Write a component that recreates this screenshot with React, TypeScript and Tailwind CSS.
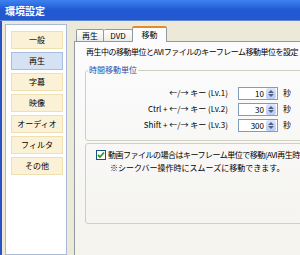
import React from "react";

const F = { fontFamily: '"Noto Sans CJK JP", "Noto Sans", sans-serif' };

function Spin({ v }: { v: string }) {
  return (
    <div className="w-[40px] h-[13px] bg-white border border-[#7F9DB9] flex items-center">
      <div className="flex-1 text-right pr-[2px] text-[8px] leading-[11px]">{v}</div>
      <div className="w-[10px] h-[11px] mr-[1px] rounded-[2px] bg-gradient-to-b from-[#DCE6FB] to-[#B6CAF5] flex flex-col items-center justify-center gap-[1px]">
        <svg width="6" height="3" viewBox="0 0 6 3"><path d="M0 3 L3 0 L6 3Z" fill="#4D6185" /></svg>
        <svg width="6" height="3" viewBox="0 0 6 3"><path d="M0 0 L3 3 L6 0Z" fill="#4D6185" /></svg>
      </div>
    </div>
  );
}

function Row({ label, v }: { label: string; v: string }) {
  return (
    <div className="flex items-center h-[16px]">
      <div className="w-[142px] text-right text-[8px] leading-[10px] whitespace-nowrap">{label}</div>
      <div className="ml-[10px]"><Spin v={v} /></div>
      <div className="ml-[5px] text-[8px] leading-[10px]">秒</div>
    </div>
  );
}

export default function App() {
  const items = ["一般", "再生", "字幕", "映像", "オーディオ", "フィルタ", "その他"];
  return (
    <div className="w-[300px] h-[255px] overflow-hidden flex flex-col bg-[#ECE9D8] text-black" style={F}>
      <div className="h-[21px] shrink-0 bg-gradient-to-b from-[#3E82F0] via-[#2159D4] to-[#2558CF] flex items-center pl-[5px] text-white font-bold text-[10px] border-b border-[#5E86D8]">
        環境設定
      </div>
      <div className="flex-1 flex min-h-0 border-l-[2px] border-[#2A50C8]">
        <div className="ml-[3px] mt-[3px] w-[62px] shrink-0 bg-white border border-[#A9B9D6] flex flex-col gap-[3px] pt-[6px] pl-[5px]">
          {items.map((t, i) => (
            <div
              key={t}
              className={
                "w-[52px] h-[18px] flex items-center justify-center text-[8px] border " +
                (i === 1
                  ? "bg-[#D5E2F4] border-[#A8BEDF]"
                  : "bg-[#FBF1D6] border-[#F0DFB0]")
              }
            >
              {t}
            </div>
          ))}
        </div>
        <div className="ml-[7px] mt-[5px] flex-1 flex flex-col min-w-0">
          <div className="h-[15px] flex items-end pl-[2px] shrink-0">
            <div className="w-[28px] h-[12px] border border-b-0 border-[#919B9C] rounded-t-[2px] bg-gradient-to-b from-white to-[#ECEBE6] text-[8px] flex items-center justify-center">
              再生
            </div>
            <div className="w-[29px] h-[12px] border border-b-0 border-l-0 border-[#919B9C] rounded-t-[2px] bg-gradient-to-b from-white to-[#ECEBE6] text-[8px] flex items-center justify-center">
              DVD
            </div>
            <div className="relative z-10 -ml-[1px] w-[35px] h-[16px] -mb-[1px] border border-b-0 border-[#919B9C] border-t-[#E68B2C] border-t-[2px] rounded-t-[2px] bg-[#FCFCFE] text-[8px] flex items-start justify-center pt-[1px]">
              移動
            </div>
          </div>
          <div className="flex-1 border-t border-l border-[#919B9C] bg-gradient-to-b from-[#FCFCFE] to-[#F4F3EE] flex flex-col">
            <div className="pl-[11px] pt-[5px] text-[8px] leading-[10px] tracking-[-0.5px] whitespace-nowrap">
              再生中の移動単位とAVIファイルのキーフレーム移動単位を設定
            </div>
            <div className="ml-[10px] mt-[13px] w-[240px] relative border border-[#D0D0BF] rounded-[3px] pt-[14px] pb-[7px]">
              <div className="absolute -top-[6px] left-[2px] px-[1px] bg-[#FAFAF8] text-[8px] leading-[10px] text-[#1F4FA8]">
                時間移動単位
              </div>
              <Row label="←/→ キー (Lv.1)" v="10" />
              <Row label="Ctrl + ←/→ キー (Lv.2)" v="30" />
              <Row label="Shift + ←/→ キー (Lv.3)" v="300" />
            </div>
            <div className="ml-[10px] mt-[2px] w-[240px] h-[81px] border border-[#D0D0BF] rounded-[3px] pt-[6px]">
              <div className="flex items-center pl-[10px] whitespace-nowrap">
                <div className="w-[10px] h-[10px] shrink-0 bg-white border border-[#1C5180] flex items-center justify-center">
                  <svg width="8" height="8" viewBox="0 0 8 8"><path d="M1 4 L3 6 L7 1.5" stroke="#21A121" strokeWidth="1.8" fill="none" /></svg>
                </div>
                <div className="ml-[2px] text-[8px] leading-[10px] tracking-[-0.5px]">動画ファイルの場合はキーフレーム単位で移動(AVI再生時</div>
              </div>
              <div className="pl-[24px] mt-[3px] text-[8px] leading-[10px] whitespace-nowrap">
                ※シークバー操作時にスムーズに移動できます。
              </div>
            </div>
          </div>
        </div>
      </div>
    </div>
  );
}
